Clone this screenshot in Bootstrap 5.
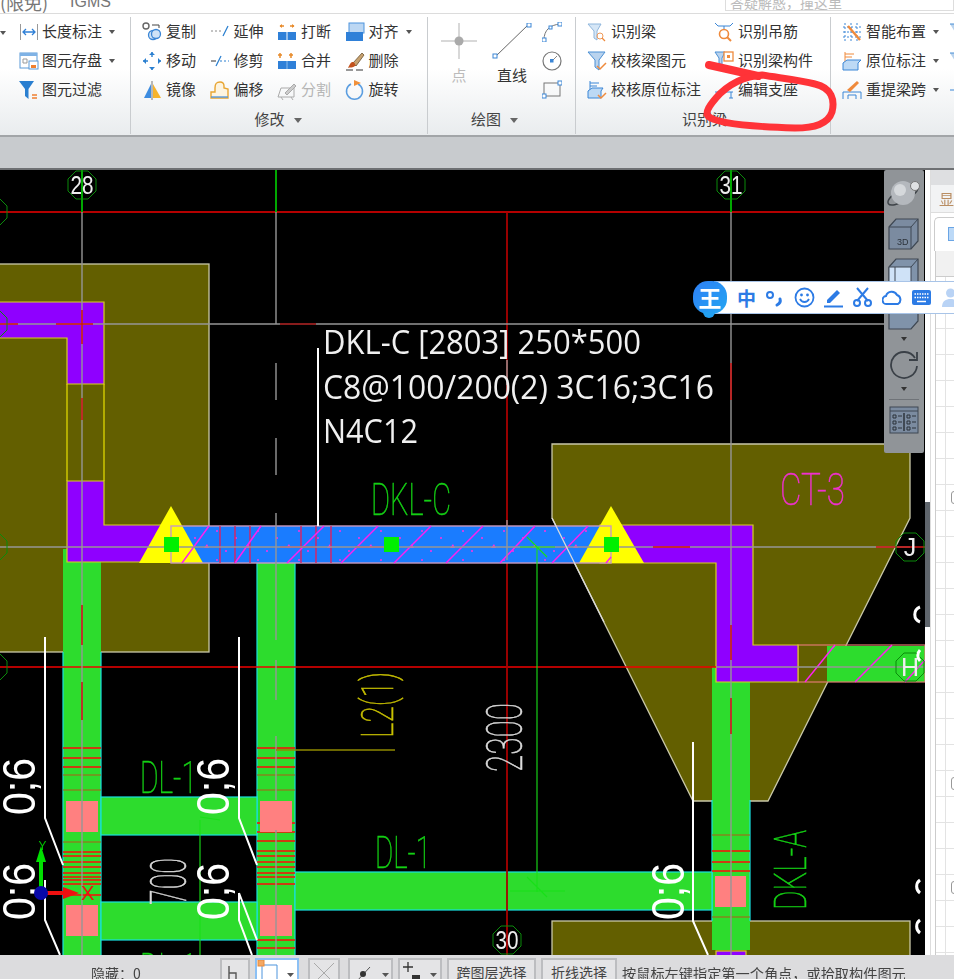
<!DOCTYPE html>
<html lang="zh-CN">
<head>
<meta charset="UTF-8">
<title>梁识别</title>
<link href="https://cdn.jsdelivr.net/npm/bootstrap@5.3.2/dist/css/bootstrap.min.css" rel="stylesheet">
<style>
html, body { margin: 0; height: 979px; overflow: hidden; background: #c8cbce; }
body { font-family: "Liberation Sans", "Noto Sans CJK SC", sans-serif; }
.app-wrap { position: relative; width: 954px; height: 979px; overflow: hidden; filter: blur(.35px); }
.cjk { font-family: "Noto Sans CJK SC", sans-serif; }

/* top strip */
.top-strip { height: 14px; background: #fff; border-bottom: 1px solid #dcdcdc; font-size: 18px; color: #777; line-height: 8px; overflow: hidden; position: relative; }
.top-strip .tab-a { width: 70px; margin-top: -2px; }
.top-strip .tab-b { margin-top: -2px; font-size: 16px; }
.search-box { margin-left: auto; width: 229px; height: 12px; margin-top: -1px; border: 1px solid #ddd; border-top: 0; font-size: 14px; color: #bbb; padding-left: 4px; line-height: 7px; }

/* ribbon */
.ribbon { height: 123px; background: linear-gradient(#fff 0, #fff 45%, #e9ecee 100%); border-bottom: 2px solid #a2a5a8; color: #333; font-size: 15px; }
.rb-grp { height: 117px; margin-top: 3px; border-right: 1px solid #c9cccf; flex: none; }
.rb-body { height: 87px; }
.rb-label { height: 30px; line-height: 30px; font-size: 15px; text-align: center; color: #444; white-space: nowrap; }
.rb-col { flex: none; display: flex; flex-direction: column; }
.rb-item { height: 29px; display: flex; align-items: center; white-space: nowrap; }
.rb-item svg { width: 20px; height: 20px; margin-right: 4px; flex: none; }
.rb-off { color: #b5b5b5; }
.tri { display: inline-block; width: 0; height: 0; border: 3.5px solid transparent; border-top: 4px solid #555; border-bottom: 0; margin-left: 7px; vertical-align: middle; flex: none; }
.rb-label .tri { border-width: 5px 4.5px 0; border-color: #666 transparent transparent; margin-left: 9px; }
.g0 { width: 131px; padding-left: 19px; position: relative; }
.g0 .rb-item svg { margin-right: 3px; }
.g0 .tri-left { position: absolute; left: 0; top: 14px; margin: 0; }
.g1 { width: 297px; padding-left: 11px; }
.g1 .rb-col { width: 67.5px; }
.g1 .rb-label { margin-left: -13px; }
.g2 { width: 148px; }
.g2 .rb-label { margin-left: -14px; }
.g3 { width: 255px; padding-left: 11px; }
.g3 .rb-col { width: 127px; }
.g3 .rb-label { margin-left: -8px; }
.g4 { width: 123px; padding-left: 11px; border-right: 0; }
.g4 .rb-col { width: 107px; }
.big-col { width: 52px; display: flex; flex-direction: column; align-items: center; font-size: 15px; }
.big-col svg { margin-top: 6px; }
.big-col span { margin-top: 5px; }
.small-col { width: 28px; display: flex; flex-direction: column; align-items: center; gap: 8.500px; padding-top: 5px; }

.grey-band { height: 33px; background: #c8cbce; border-bottom: 2px solid #6e7073; }

/* work area */
.work-area { height: 785px; }
.cad-box { width: 925px; height: 785px; position: relative; background: #000; overflow: hidden; flex: none; }
.cad-box svg.cad { display: block; }
.cad text { font-family: "Liberation Sans", sans-serif; }
.cad text.cad-note { font-family: "Open Sans", "Noto Sans", sans-serif; }
.cad text.cad-thin, .cad .cad-thin text { font-family: Roboto, "Liberation Sans", sans-serif; font-weight: 100; stroke-width: .6px; }

.view-bar { position: absolute; left: 884px; top: 0; width: 40px; height: 283px; background: #909498; border-radius: 2px; display: flex; flex-direction: column; align-items: center; }

.split-bar { width: 5px; background: #fff; flex: none; padding-top: 332px; }
.split-bar div { height: 125px; background: #5f656c; }
.side-panel { flex: 1; background: #fff; overflow: hidden; border-left: 1px solid #ddd; }
.sp-head { height: 15px; background: #dedfe1; }
.sp-title { height: 28px; background: #f2f3f4; color: #b98d62; font-size: 15px; padding-left: 8px; line-height: 28px; white-space: nowrap; border-bottom: 1px solid #ddd; }
.sp-tab { height: 34px; margin: 4px 0 0 3px; border: 1px solid #ccc; border-right: 0; border-bottom: 0; border-radius: 5px 0 0 0; background: #fff; padding: 9px 0 0 13px; }
.sp-tab i { display: block; width: 12px; height: 14px; background: #bcd9f7; border: 1px solid #6aa5e5; }
.sp-grid { margin-left: 4px; border-left: 1px solid #ccc; }
.sp-row { height: 26px; border-bottom: 1px solid #e3e3e3; background: linear-gradient(90deg, transparent 9px, #e3e3e3 9px, #e3e3e3 10px, transparent 10px); position: relative; }
.sp-row.hd { background: #f1f1f1; border-bottom: 1px solid #ccc; }
.sp-row span { position: absolute; left: 15px; top: 6px; width: 13px; height: 13px; border: 1px solid #999; border-radius: 3px; background: #fff; }

/* status bar */
.status-bar { height: 24px; background: #dcdcde; font-size: 14px; color: #444; white-space: nowrap; overflow: hidden; padding-top: 3px; position: relative; }
.st-hide { width: 220px; padding-left: 91px; flex: none; line-height: 30px; }
.st-btn { height: 30px; border: 2px solid #bcbdc0; background: #e4e4e6; margin-right: 5px; flex: none; text-align: center; line-height: 25px; position: relative; }
.st-btn svg { display: block; }
.st-btn.on { background: #fff; border-color: #8cc0f4; }
.st-tip { margin-left: 0; line-height: 30px; font-size: 14.200px; }

/* floating */
.ink-mark { position: absolute; left: 0; top: 0; pointer-events: none; }
.ime-bar { position: absolute; left: 692px; top: 281px; width: 262px; height: 34px; display: flex; align-items: center; }
.ime-strip { position: absolute; left: 22px; right: 0; top: 0; height: 33px; background: #fff; border-top: 1px solid #a8c4e8; border-bottom: 1px solid #a8c4e8; display: flex; align-items: center; padding-left: 23px; gap: 8.300px; }
.ime-logo { position: relative; width: 34px; height: 33px; background: linear-gradient(135deg, #2f7ff5, #22a6f2); border-radius: 15px; color: #fff; font: 700 23px/32px "Noto Sans CJK SC", sans-serif; text-align: center; z-index: 1; margin-left: 1px; margin-top: -2px; }
.ime-logo::after { content: ""; position: absolute; left: 10px; bottom: -4px; width: 12px; height: 6px; background: #22a0f2; border-radius: 0 0 8px 8px; }
.ime-zh { font: 700 19px/1 "Noto Sans CJK SC", sans-serif; color: #2c7be5; width: 20px; text-align: center; }
.ime-strip svg { width: 21px; height: 21px; flex: none; }
</style>
</head>
<body>
<div class="app-wrap d-flex flex-column">

    <div class="top-strip d-flex cjk">
        <div class="tab-a">(限免)</div>
        <div class="tab-b" style="font-family:'Liberation Sans'">IGMS</div>
        <div class="search-box">答疑解惑，撞这里</div>
    </div>

    <div class="ribbon d-flex">
        <div class="rb-grp g0 cjk">
            <span class="tri tri-left"></span>
            <div class="rb-body">
                <div class="rb-item"><svg viewBox="0 0 20 20"><path d="M1.5 2v16M18.5 2v16" stroke="#999" fill="none"/><path d="M4 10h12M7 7l-3 3 3 3M13 7l3 3-3 3" stroke="#2e7fd6" stroke-width="1.3" fill="none"/></svg>长度标注<span class="tri"></span></div>
                <div class="rb-item"><svg viewBox="0 0 20 20"><rect x="1" y="2" width="17" height="15" fill="#fff" stroke="#5b9ad8"/><rect x="1" y="2" width="17" height="3" fill="#7fb2e5"/><path d="M4 8h4v4H4z" fill="none" stroke="#999"/><rect x="10" y="10" width="9" height="8" fill="#fff" stroke="#5b9ad8"/><rect x="12" y="14" width="5" height="3" fill="#f08030"/></svg>图元存盘<span class="tri"></span></div>
                <div class="rb-item"><svg viewBox="0 0 20 20"><path d="M0 1h15L9.500 9v10L6 16V9z" fill="#2a7fd0"/><path d="M13 15h5M13 18h5" stroke="#f08030" stroke-width="1.5"/></svg>图元过滤</div>
            </div>
        </div>

        <div class="rb-grp g1 cjk">
            <div class="rb-body d-flex">
                <div class="rb-col">
                    <div class="rb-item"><svg viewBox="0 0 20 20"><rect x="1" y="1" width="6" height="6" rx="3" fill="none" stroke="#666" stroke-width="1.4"/><circle cx="11" cy="13" r="4.500" fill="#cfe3f7" stroke="#3b86d6" stroke-width="1.3"/><circle cx="14" cy="12" r="4.500" fill="#cfe3f7" stroke="#3b86d6" stroke-width="1.3"/><path d="M10 3h7v3" stroke="#444" fill="none"/></svg>复制</div>
                    <div class="rb-item"><svg viewBox="0 0 20 20"><path d="M10 1v18M1 10h18" stroke="#2a7fd0" stroke-width="1.4" stroke-dasharray="5 10 5"/><path d="M7 4l3-3 3 3zM7 16l3 3 3-3zM4 7l-3 3 3 3zM16 7l3 3-3 3z" fill="#2a7fd0"/></svg>移动</div>
                    <div class="rb-item"><svg viewBox="0 0 20 20"><path d="M9 4v14H2z" fill="#3d8ce0"/><path d="M11 4v14h8z" fill="#f7b32b"/><path d="M10 1v19" stroke="#777"/></svg>镜像</div>
                </div>
                <div class="rb-col">
                    <div class="rb-item"><svg viewBox="0 0 20 20"><path d="M1 9h11" stroke="#888" stroke-dasharray="2 2"/><path d="M13 14l5-10" stroke="#2a7fd0" stroke-width="1.3"/></svg>延伸</div>
                    <div class="rb-item"><svg viewBox="0 0 20 20"><path d="M1 10h5" stroke="#333"/><path d="M6 15l5-10" stroke="#2a7fd0" stroke-width="1.3"/><path d="M10 10h9" stroke="#2a7fd0" stroke-dasharray="2 2"/></svg>修剪</div>
                    <div class="rb-item"><svg viewBox="0 0 20 20"><path d="M2 12h3V8c0-5 2-6 5-6s4 2 4 4v2l4 1v9H1v-6z" fill="#fdf4e0" stroke="#e8a531" stroke-width="1.4"/><path d="M1 17h17" stroke="#4d94dd" stroke-width="1.3"/></svg>偏移</div>
                </div>
                <div class="rb-col">
                    <div class="rb-item"><svg viewBox="0 0 20 20"><path d="M3 4h4M17 4h-4" stroke="#e88a2a" stroke-width="1.5"/><path d="M5 2L2.500 4 5 6zM15 2l2.500 2L15 6z" fill="#e88a2a"/><rect x="1" y="10" width="8.500" height="8" fill="#2f80d8"/><rect x="10.500" y="10" width="8.500" height="8" fill="#2f80d8"/></svg>打断</div>
                    <div class="rb-item"><svg viewBox="0 0 20 20"><path d="M3 2v5M14 2v5" stroke="#e88a2a" stroke-width="1.5"/><path d="M1 4h4M12 4h4" stroke="#e88a2a" stroke-width="1.5"/><rect x="1" y="10" width="18" height="8" fill="#2f80d8"/><path d="M10 10v8" stroke="#8ebde9"/></svg>合并</div>
                    <div class="rb-item rb-off"><svg viewBox="0 0 20 20"><path d="M1 17l3-9h13v9zM4 17l2 3M14 17l2 3" fill="none" stroke="#aaa"/><path d="M8 13L17 4l2 2-9 9z" fill="#ccc" stroke="#aaa"/></svg>分割</div>
                </div>
                <div class="rb-col">
                    <div class="rb-item"><svg viewBox="0 0 20 20"><rect x="4" y="1" width="15" height="10" fill="#bcd7f3" stroke="#4d94dd"/><rect x="1" y="10" width="17" height="9" fill="#2f80d8"/></svg>对齐<span class="tri"></span></div>
                    <div class="rb-item"><svg viewBox="0 0 20 20"><path d="M8 12L17 2l2 2-8 11z" fill="#c8a270" stroke="#6b5330" stroke-width=".8"/><path d="M7 11c2 0 4 2 3 4-2 2-5 1-7 2 1-2 2-5 4-6z" fill="#c4531e"/><path d="M1 19h7M11 19h7" stroke="#333"/></svg>删除</div>
                    <div class="rb-item"><svg viewBox="0 0 20 20"><path d="M13 4a8 8 0 1 1-7 0" fill="none" stroke="#5a9de0" stroke-width="1.5"/><path d="M9 0l7 3-7 3z" fill="#f0903a"/></svg>旋转</div>
                </div>
            </div>
            <div class="rb-label">修改<span class="tri"></span></div>
        </div>

        <div class="rb-grp g2 cjk">
            <div class="rb-body d-flex">
                <div class="big-col ms-1" style="width:54px;color:#bbb">
                    <svg width="36" height="36" viewBox="0 0 36 36"><path d="M18 0v36M0 18h36" stroke="#ccc" stroke-width="1.5"/><circle cx="18" cy="18" r="4.500" fill="#aaa"/></svg>
                    <span>点</span>
                </div>
                <div class="big-col">
                    <svg width="40" height="36" viewBox="0 0 40 36"><path d="M3 34L37 1" stroke="#666" stroke-width="1"/><rect x="1" y="31" width="4" height="4" fill="#fff" stroke="#3b86d6"/><rect x="35" y="0" width="4" height="4" fill="#fff" stroke="#3b86d6"/></svg>
                    <span style="color:#333">直线</span>
                </div>
                <div class="small-col">
                    <svg width="20" height="20" viewBox="0 0 20 20"><path d="M2 18C2 8 8 3 18 2" fill="none" stroke="#777"/><rect x="0" y="16" width="4" height="4" fill="#fff" stroke="#3b86d6"/><rect x="16" y="0" width="4" height="4" fill="#fff" stroke="#3b86d6"/><rect x="7" y="4" width="3" height="3" fill="#fff" stroke="#3b86d6"/></svg>
                    <svg width="20" height="20" viewBox="0 0 20 20"><circle cx="10" cy="10" r="9" fill="none" stroke="#777" stroke-width="1.2"/><path d="M10 10l5-5" stroke="#888"/><rect x="8" y="8" width="3.500" height="3.500" fill="#3b86d6"/></svg>
                    <svg width="20" height="20" viewBox="0 0 20 20"><rect x="2" y="4" width="16" height="13" fill="none" stroke="#777"/><rect x="0" y="15" width="4" height="4" fill="#fff" stroke="#3b86d6"/><rect x="16" y="2" width="4" height="4" fill="#fff" stroke="#3b86d6"/></svg>
                </div>
            </div>
            <div class="rb-label">绘图<span class="tri"></span></div>
        </div>

        <div class="rb-grp g3 cjk">
            <div class="rb-body d-flex">
                <div class="rb-col">
                    <div class="rb-item"><svg viewBox="0 0 20 20"><path d="M1 2h13l-4 7v9l-3-2V9z" fill="#d5e6f6" stroke="#8fb6dc"/><circle cx="13" cy="14" r="3" fill="none" stroke="#ef9a5b"/><path d="M15 16l3 3" stroke="#ef8a3c" stroke-width="1.3"/></svg>识别梁</div>
                    <div class="rb-item"><svg viewBox="0 0 20 20"><path d="M1 1h17l-6 8v10l-4-3V9z" fill="#b9d3ee" stroke="#4a8fd4"/><path d="M10 15l3 3 6-6" stroke="#ef8a3c" stroke-width="1.5" fill="none"/></svg>校核梁图元</div>
                    <div class="rb-item"><svg viewBox="0 0 20 20"><path d="M3 1v10M3 3h9M3 6h7" stroke="#3b86d6" fill="none"/><path d="M1 11l4-3h11l-2 3v7H1z" fill="#bcd9f5" stroke="#3b86d6"/><path d="M11 15l3 3 5-5" stroke="#ef8a3c" stroke-width="1.5" fill="none"/></svg>校核原位标注</div>
                </div>
                <div class="rb-col">
                    <div class="rb-item"><svg viewBox="0 0 20 20"><path d="M1 1l3 3h12l3-3M10 4v3" stroke="#3b86d6" fill="none"/><circle cx="10" cy="12" r="4.500" fill="none" stroke="#ef8a3c" stroke-width="1.6"/><path d="M13 15l4 4" stroke="#ef8a3c" stroke-width="2"/></svg>识别吊筋</div>
                    <div class="rb-item"><svg viewBox="0 0 20 20"><path d="M1 1h10l-3 6v7l-3-2V7z" fill="#b9d3ee" stroke="#4a8fd4"/><rect x="10" y="1" width="9" height="9" fill="#fff" stroke="#ef8a3c" stroke-width="1.3"/><rect x="13" y="4" width="3" height="3" fill="#ef8a3c"/></svg>识别梁构件</div>
                    <div class="rb-item"><svg viewBox="0 0 20 20"><path d="M1 12h18M3 12v6M17 12v6M1 18h4M15 18h4" stroke="#3b86d6" fill="none"/><path d="M8 10l8-7 2 2-7 6z" fill="#ef8a3c"/></svg>编辑支座</div>
                </div>
            </div>
            <div class="rb-label">识别梁</div>
        </div>

        <div class="rb-grp g4 cjk">
            <div class="rb-body d-flex">
                <div class="rb-col">
                    <div class="rb-item"><svg viewBox="0 0 20 20"><path d="M3 1v18M9 1v18M15 1v18M1 5h18M1 10h18M1 15h18" stroke="#3b86d6" stroke-dasharray="2 2" fill="none"/><path d="M6 4l12 14" stroke="#ef8a3c" stroke-width="2.400"/></svg>智能布置<span class="tri"></span></div>
                    <div class="rb-item"><svg viewBox="0 0 20 20"><path d="M3 1v10M3 3h9M3 6h7" stroke="#ef8a3c" fill="none"/><path d="M1 12l4-3h14l-3 3v7H1z" fill="#bcd9f5" stroke="#3b86d6"/></svg>原位标注<span class="tri"></span></div>
                    <div class="rb-item"><svg viewBox="0 0 20 20"><path d="M1 19v-7h18v7M6 19v-4h8v4" stroke="#3b86d6" fill="none"/><path d="M5 10l10-9 2 2-9 9z" fill="#ef8a3c"/></svg>重提梁跨<span class="tri"></span></div>
                </div>
                <div class="rb-col" style="width:10px;overflow:hidden">
                    <div class="rb-item"><svg viewBox="0 0 20 20"><path d="M1 2h16l-6 7v9" fill="#b9d3ee" stroke="#4a8fd4"/></svg></div>
                    <div class="rb-item"><svg viewBox="0 0 20 20"><path d="M1 2h16l-6 7v9" fill="#b9d3ee" stroke="#4a8fd4"/></svg></div>
                    <div class="rb-item"><svg viewBox="0 0 20 20"><path d="M1 10h16" stroke="#3b86d6"/></svg></div>
                </div>
            </div>
        </div>
    </div>

    <div class="grey-band"></div>

    <div class="work-area d-flex">
        <div class="cad-box">
            <svg class="cad" width="925" height="785" viewBox="0 170 925 785">
                <defs>
                    <pattern id="dots" width="41" height="29" patternUnits="userSpaceOnUse" patternTransform="translate(171 527)">
                        <circle cx="5" cy="4" r="1" fill="#ff30e0"/><circle cx="24" cy="11" r="1" fill="#ff30e0"/><path d="M33 21l3-4 2 4z" fill="#ff30e0"/><circle cx="14" cy="24" r="1" fill="#ff30e0"/>
                    </pattern>
                    <polygon id="oct" points="-6,-14 6,-14 14,-6 14,6 6,14 -6,14 -14,6 -14,-6"/>
                </defs>

                <!-- pile caps -->
                <g fill="#635f00" stroke="#c9c8a8" stroke-width="1.3">
                    <rect x="-5" y="264" width="214" height="388"/>
                    <polygon points="552,444 910,444 910,518 768,801 693,801 552,518"/>
                    <rect x="552" y="921" width="358" height="60"/>
                </g>

                <!-- beams -->
                <g fill="#2ddc2d">
                    <rect x="63" y="549" width="38" height="407"/>
                    <rect x="257" y="560" width="38" height="396"/>
                    <rect x="712" y="667" width="38" height="283"/>
                    <rect x="827" y="646" width="98" height="36"/>
                </g>
                <g stroke="#18e0e0" stroke-width="1.2" fill="none">
                    <path d="M63 652V956M101 652V956M257 563V956M295 563V956M712 800V921M750 800V921"/>
                </g>
                <g fill="#2ddc2d" stroke="#18e0e0" stroke-width="1.2">
                    <rect x="101" y="797" width="156" height="38"/>
                    <rect x="101" y="902" width="156" height="38"/>
                    <rect x="295" y="872" width="417" height="38"/>
                </g>
                <rect x="798" y="645" width="127" height="37" fill="none" stroke="#e07a70" stroke-width="1.2"/>

                <!-- stirrups -->
                <g stroke="#ff0808" stroke-width="1.700">
                    <path d="M63 748H101M63 758H101M63 767H101M257 748H295M257 758H295M257 767H295"/>
                    <path d="M63 852H101M63 856H101M63 862H101M63 867H101M63 873H101M63 877H101M63 880H101M63 884H101M63 895H101"/>
                    <path d="M257 823H295M257 832H295M257 841H295M257 851H295M257 856H295M257 862H295M257 867H295M257 873H295M257 877H295M257 884H295M257 940H295M257 948H295"/>
                    <path d="M712 851H750M712 862H750M712 871H750"/>
                </g>
                <g stroke="#b05a18" stroke-width="1.2">
                    <path d="M63 775H101M63 790H101M257 775H295M257 790H295M712 835H750M712 917H750M63 842H101"/>
                </g>

                <!-- column footings -->
                <g fill="#ff8080">
                    <rect x="66" y="801" width="32" height="31"/>
                    <rect x="66" y="905" width="32" height="31"/>
                    <rect x="260" y="801" width="32" height="31"/>
                    <rect x="260" y="905" width="32" height="31"/>
                    <rect x="715" y="876" width="31" height="31"/>
                </g>

                <!-- purple frame -->
                <g fill="#8f00ff" stroke="#d8d020" stroke-width="1.2">
                    <path d="M-5 302H104V384H67V338H-5z"/>
                    <path d="M67 481H104V525H180V562H67z"/>
                    <path d="M600 525H753V645H798V682H716V563H600z"/>
                    <rect x="716" y="951" width="30" height="10"/>
                </g>
                <path d="M67 384V481M104 384V481" stroke="#e8e000" stroke-width="1.2"/>

                <!-- red axis lines -->
                <path d="M0 212H885M0 667H716" stroke="#f00000" stroke-width="1.400"/>
                <path d="M507 212V955" stroke="#a80000" stroke-width="1.800"/>
                <path d="M276 170V212M731 170V212M82 170V212" stroke="#00a800" stroke-width="2"/>

                <!-- selected beam -->
                <rect x="171" y="526" width="440" height="37" fill="#1a7cff"/>
                <rect x="171" y="526" width="440" height="37" fill="url(#dots)"/>
                <g fill="#ffff00">
                    <polygon points="171,506 139,563 203,563"/>
                    <polygon points="611,506 579,563 644,563"/>
                </g>
                <rect x="171" y="526" width="440" height="37" fill="none" stroke="#c89ac0" stroke-width="1.400"/>
                <g stroke="#e02060" stroke-width="1.400">
                    <path d="M220 526V563M235 526V563M250 526V563M301 526V563M316 526V563M331 526V563"/>
                </g>
                <g stroke="#ff20f0" stroke-width="1.500">
                    <path d="M182 563L209 526M235 563L261 526M287 563L324 526M341 563L378 526M394 563L431 526M446 563L483 526M500 563L535 526M552 563L588 526M606 563L611 557M805 682L835 645M855 682L892 645M905 682L925 660"/>
                </g>
                <path d="M280 547H316M355 547H391" stroke="#d02050" stroke-width="1.500"/>

                <!-- gray axes -->
                <g stroke="#969696" stroke-width="1.400" fill="none">
                    <path d="M0 324H885"/>
                    <path d="M0 547H910"/>
                    <path d="M82 212V955"/>
                    <path d="M731 212V955"/>
                    <path d="M276 212V324M276 363V400M276 438V475M276 513V640M276 660V700M276 736V800M276 830V955"/>
                    <path d="M507 360V385M507 520V560"/>
                    <path d="M716 667H925"/>
                </g>
                <g stroke="#d01010" stroke-width="1.500">
                    <path d="M0 324H18M56 324H93M82 310V344M82 398V420M82 605V645M82 682V720M731 363V400M731 625V660M731 698V734M876 547H925M653 547H690"/>
                </g>
                <path d="M280 324H316" stroke="#900000" stroke-width="1.400"/>

                <!-- white leaders -->
                <g stroke="#fff" stroke-width="2" fill="none">
                    <path d="M318 348V526"/>
                    <path d="M45 637V818L63 865"/>
                    <path d="M45 880V920L60 955"/>
                    <path d="M239 637V818L257 865"/>
                    <path d="M239 893V920L252 955M239 893L257 940"/>
                    <path d="M693 742V921L708 955"/>
                </g>
                <path d="M552 518L604 622" stroke="#dcdcdc" stroke-width="1.200"/>

                <!-- green dim -->
                <g stroke="#18e018" stroke-width="1.100" fill="none">
                    <path d="M537 547V872M520 547H555M527 537L547 557"/>
                    <path d="M537 872V892M527 877L547 897M510 891H565"/>
                    <path d="M200 820V955M200 817L220 820"/>
                </g>
                <path d="M276 750H395" stroke="#8f8a00" stroke-width="1.600"/>

                <!-- support markers -->
                <g fill="#00f000">
                    <rect x="164" y="537" width="15" height="15"/>
                    <rect x="384" y="537" width="15" height="15"/>
                    <rect x="604" y="537" width="15" height="15"/>
                </g>

                <!-- axis balloons -->
                <g fill="none" stroke="#0b8a0b" stroke-width="1">
                    <use href="#oct" x="82" y="185"/>
                    <use href="#oct" x="731" y="185"/>
                    <use href="#oct" x="507" y="940"/>
                    <use href="#oct" x="910" y="547"/>
                    <use href="#oct" x="910" y="667"/>
                    <use href="#oct" x="-7" y="212"/>
                    <use href="#oct" x="-7" y="324"/>
                    <use href="#oct" x="-7" y="547"/>
                    <use href="#oct" x="-7" y="667"/>
                </g>
                <g fill="#eee" font-size="25" text-anchor="middle">
                    <text x="82" y="194" textLength="23" lengthAdjust="spacingAndGlyphs">28</text>
                    <text x="731" y="194" textLength="23" lengthAdjust="spacingAndGlyphs">31</text>
                    <text x="507" y="949" textLength="23" lengthAdjust="spacingAndGlyphs">30</text>
                    <text x="910" y="556">J</text>
                    <text x="910" y="676">H</text>
                </g>
                <path d="M920 607a8 8 0 0 0 0 15M920 650a8 8 0 0 0 0 11M920 880a8 8 0 0 0 0 13M920 920a8 8 0 0 0 0 13" stroke="#fff" stroke-width="3" fill="none"/>

                <!-- annotation text -->
                <g fill="#f0f0f0" font-size="33">
                    <text class="cad-note" x="323" y="354" textLength="318" lengthAdjust="spacingAndGlyphs">DKL-C [2803] 250*500</text>
                    <text class="cad-note" x="323" y="399" textLength="391" lengthAdjust="spacingAndGlyphs">C8@100/200(2) 3C16;3C16</text>
                    <text class="cad-note" x="323" y="443" textLength="95" lengthAdjust="spacingAndGlyphs">N4C12</text>
                </g>
                <g class="cad-thin" fill="#14d014" stroke="#14d014" font-size="45">
                    <text x="371" y="515" textLength="80" lengthAdjust="spacingAndGlyphs">DKL-C</text>
                    <text x="140" y="793" textLength="57" lengthAdjust="spacingAndGlyphs">DL-1</text>
                    <text x="375" y="868" textLength="56" lengthAdjust="spacingAndGlyphs">DL-1</text>
                    <text x="140" y="985" textLength="57" lengthAdjust="spacingAndGlyphs">DL-1</text>
                    <text transform="translate(806 910) rotate(-90)" textLength="80" lengthAdjust="spacingAndGlyphs">DKL-A</text>
                </g>
                <text class="cad-thin" x="780" y="505" font-size="45" fill="#f030d0" stroke="#f030d0" textLength="65" lengthAdjust="spacingAndGlyphs">CT-3</text>
                <text class="cad-thin" transform="translate(393 738) rotate(-90)" font-size="44" fill="#c8c000" stroke="#c8c000" textLength="66" lengthAdjust="spacingAndGlyphs">L2(1)</text>
                <text class="cad-thin" transform="translate(522 772) rotate(-90)" font-size="50" fill="#dcdcdc" stroke="#dcdcdc" textLength="69" lengthAdjust="spacingAndGlyphs">2300</text>
                <text class="cad-thin" transform="translate(186 905) rotate(-90)" font-size="50" fill="#dcdcdc" stroke="#dcdcdc" textLength="47" lengthAdjust="spacingAndGlyphs">700</text>
                <g fill="#fff" font-size="47">
                    <text transform="translate(35 815) rotate(-90)" textLength="57" lengthAdjust="spacingAndGlyphs">0;6</text>
                    <text transform="translate(35 920) rotate(-90)" textLength="57" lengthAdjust="spacingAndGlyphs">0;6</text>
                    <text transform="translate(229 815) rotate(-90)" textLength="57" lengthAdjust="spacingAndGlyphs">0;6</text>
                    <text transform="translate(229 920) rotate(-90)" textLength="57" lengthAdjust="spacingAndGlyphs">0;6</text>
                    <text transform="translate(684 920) rotate(-90)" textLength="57" lengthAdjust="spacingAndGlyphs">0;6</text>
                </g>

                <!-- ucs -->
                <path d="M41 893V856" stroke="#00e000" stroke-width="4"/>
                <polygon points="41,846 36,862 46,862" fill="#00e000"/>
                <path d="M41 893H68" stroke="#f01010" stroke-width="4"/>
                <polygon points="79,893 63,887 63,899" fill="#f01010"/>
                <circle cx="41" cy="893" r="7" fill="#0808a8"/>
                <text x="35" y="850" font-size="17" fill="#00c000" transform="translate(14 170) scale(.7 .8)">Y</text>
                <text x="81" y="900" font-size="20" fill="#f01010">X</text>
            </svg>

            <div class="view-bar">
                <svg class="mt-2" width="36" height="32" viewBox="0 0 36 32"><ellipse cx="17" cy="17" rx="17" ry="6" transform="rotate(-30 17 17)" fill="none" stroke="#3e4348" stroke-width="1.500"/><circle cx="17" cy="15" r="12" fill="#b4b8bd"/><circle cx="14" cy="12" r="6" fill="#d5d8db"/><circle cx="29" cy="8" r="4.500" fill="#dfe1e3" stroke="#777"/></svg>
                <svg class="mt-2" width="32" height="32" viewBox="0 0 32 32"><path d="M1 9L8 1h22v22l-7 8H1z" fill="#7b8ba0" stroke="#3e4752" stroke-width="1.200"/><path d="M1 9h22v22M23 9l7-8" fill="none" stroke="#3e4752"/><text x="9" y="27" font-size="9" fill="#2c333b">3D</text></svg>
                <svg class="mt-2" width="32" height="72" viewBox="0 0 32 72"><path d="M1 9L8 1h22v62l-7 8H1z" fill="#8093aa" stroke="#3e4752" stroke-width="1.200"/><path d="M1 9h22v22H1zM23 9l7-8" fill="#cfe2f7" stroke="#3e4752"/><path d="M7 9v18h20" fill="none" stroke="#3e4752"/></svg>
                <span class="tri" style="margin:7px 0 0;border-top-color:#333"></span>
                <svg style="margin-top:6px" width="30" height="32" viewBox="0 0 30 32"><path d="M26 11A13 13 0 1 0 28 19" fill="none" stroke="#3a4047" stroke-width="1.800"/><path d="M28 5v8h-8" fill="none" stroke="#3a4047" stroke-width="1.800"/></svg>
                <span class="tri" style="margin:8px 0 0;border-top-color:#333"></span>
                <div style="width:30px;border-top:1px solid #6f7378;margin-top:8px"></div>
                <svg class="mt-1" width="30" height="30" viewBox="0 0 30 30"><rect x="1" y="3" width="28" height="26" fill="#7b8ba0" stroke="#3e4752"/><path d="M1 7h28" stroke="#3e4752"/><path d="M15 9v18" stroke="#2c333b" stroke-width="1.500"/><path d="M4 11h3v3H4zM4 17h3v3H4zM4 23h3v3H4zM18 11h3v3h-3zM18 17h3v3h-3zM18 23h3v3h-3z" fill="none" stroke="#2c333b"/><path d="M9 12h4M9 18h4M9 24h4M23 12h4M23 18h4M23 24h4" stroke="#2c333b"/></svg>
            </div>
        </div>
        <div class="split-bar"><div></div></div>
        <div class="side-panel">
            <div class="sp-head"></div>
            <div class="sp-title cjk">显示</div>
            <div class="sp-tab"><i></i></div>
            <div class="sp-grid" id="spGrid"></div>
        </div>
    </div>

    <div class="status-bar d-flex cjk">
        <div class="st-hide">隐藏：0</div>
        <div class="st-btn" style="width:30px"><svg width="26" height="26" viewBox="0 0 26 26"><path d="M7 6v13M7 13h7v8" fill="none" stroke="#555" stroke-width="1.400"/></svg></div>
        <div class="st-btn on" style="width:44px;margin-right:9px"><svg width="40" height="26" viewBox="0 0 40 26"><path d="M5 5h15v20H5z" fill="#fff" stroke="#4d94dd"/><rect x="1" y="0" width="6" height="6" fill="#f4a864" stroke="#e88a3a"/><path d="M30 13h7l-3.500 4z" fill="#555"/></svg></div>
        <div class="st-btn" style="width:32px;margin-right:8px"><svg width="28" height="26" viewBox="0 0 28 26"><path d="M4 3l20 20M24 3L4 23" stroke="#aaa"/></svg></div>
        <div class="st-btn" style="width:45px"><svg width="41" height="26" viewBox="0 0 41 26"><path d="M7 21L20 7" stroke="#555"/><circle cx="13" cy="14" r="3" fill="#333"/><path d="M32 13h7l-3.500 4z" fill="#555"/></svg></div>
        <div class="st-btn" style="width:44px"><svg width="40" height="26" viewBox="0 0 40 26"><path d="M8 2v10M3 7h10" stroke="#333" stroke-width="1.300"/><path d="M12 15h8v4h-8z" fill="#333"/><path d="M30 13h7l-3.500 4z" fill="#555"/></svg></div>
        <div class="st-btn" style="width:89px">跨图层选择</div>
        <div class="st-btn" style="width:76px">折线选择</div>
        <div class="st-tip">按鼠标左键指定第一个角点，或拾取构件图元</div>
    </div>

    <svg class="ink-mark" width="954" height="979" viewBox="0 0 954 979">
        <path d="M709 65L758 76" stroke="#ff3338" stroke-width="8" stroke-linecap="round" fill="none"/>
        <path d="M762 75C745 76 728 84 716 98 710 105 705 112 708 116 716 124 760 127 795 128 815 128 828 124 832 112 835 100 832 88 815 84 800 80 780 78 762 75Z" stroke="#ff3338" stroke-width="7" fill="none" stroke-linecap="round"/>
    </svg>

    <div class="ime-bar">
        <div class="ime-strip">
            <div class="ime-zh">中</div>
            <svg viewBox="0 0 21 21"><circle cx="6" cy="8" r="3" fill="none" stroke="#2c7be5" stroke-width="2"/><path d="M16 12c1 3-1 5-3 6" stroke="#2c7be5" stroke-width="3" fill="none" stroke-linecap="round"/></svg>
            <svg viewBox="0 0 21 21"><circle cx="10.500" cy="10.500" r="9" fill="none" stroke="#2c7be5" stroke-width="1.800"/><circle cx="7.500" cy="8" r="1.400" fill="#2c7be5"/><circle cx="13.500" cy="8" r="1.400" fill="#2c7be5"/><path d="M6 12c2 4 7 4 9 0" fill="none" stroke="#2c7be5" stroke-width="1.800"/></svg>
            <svg viewBox="0 0 21 21"><path d="M4 13L14 3l3 3L7 16H4z" fill="#2c7be5"/><path d="M1 19.500h19" stroke="#2c7be5" stroke-width="2"/></svg>
            <svg viewBox="0 0 21 21"><path d="M5 1l11 13M16 1L5 14" stroke="#2c7be5" stroke-width="2"/><circle cx="5" cy="16" r="3" fill="none" stroke="#2c7be5" stroke-width="2"/><circle cx="16" cy="16" r="3" fill="none" stroke="#2c7be5" stroke-width="2"/></svg>
            <svg viewBox="0 0 21 21"><path d="M5 17a4 4 0 0 1-1-8 6 6 0 0 1 11-1 5 5 0 0 1 1 9z" fill="none" stroke="#2c7be5" stroke-width="2"/></svg>
            <svg viewBox="0 0 21 21"><rect x="1" y="3" width="19" height="15" rx="2" fill="#2c7be5"/><path d="M3.500 7h14M3.500 10.500h14" stroke="#fff" stroke-width="1.500" stroke-dasharray="1.500 1"/><path d="M6 14.500h9" stroke="#fff" stroke-width="1.500"/></svg>
            <svg viewBox="0 0 21 21"><circle cx="10.500" cy="6" r="4.500" fill="#b9d3f5"/><path d="M2 20c0-6 4-8 8.500-8s8.500 2 8.500 8z" fill="#b9d3f5"/></svg>
        </div>
        <div class="ime-logo">王</div>
    </div>
</div>
<script src="https://cdn.jsdelivr.net/npm/bootstrap@5.3.2/dist/js/bootstrap.bundle.min.js"></script>
<script>
// property table rows on the right side
const checks = [8, 19, 23];
let rows = '<div class="sp-row hd"></div>';
for (let i = 0; i < 27; i++) {
    rows += '<div class="sp-row">' + (checks.includes(i) ? '<span></span>' : '') + '</div>';
}
document.getElementById('spGrid').innerHTML = rows;
</script>
</body>
</html>
